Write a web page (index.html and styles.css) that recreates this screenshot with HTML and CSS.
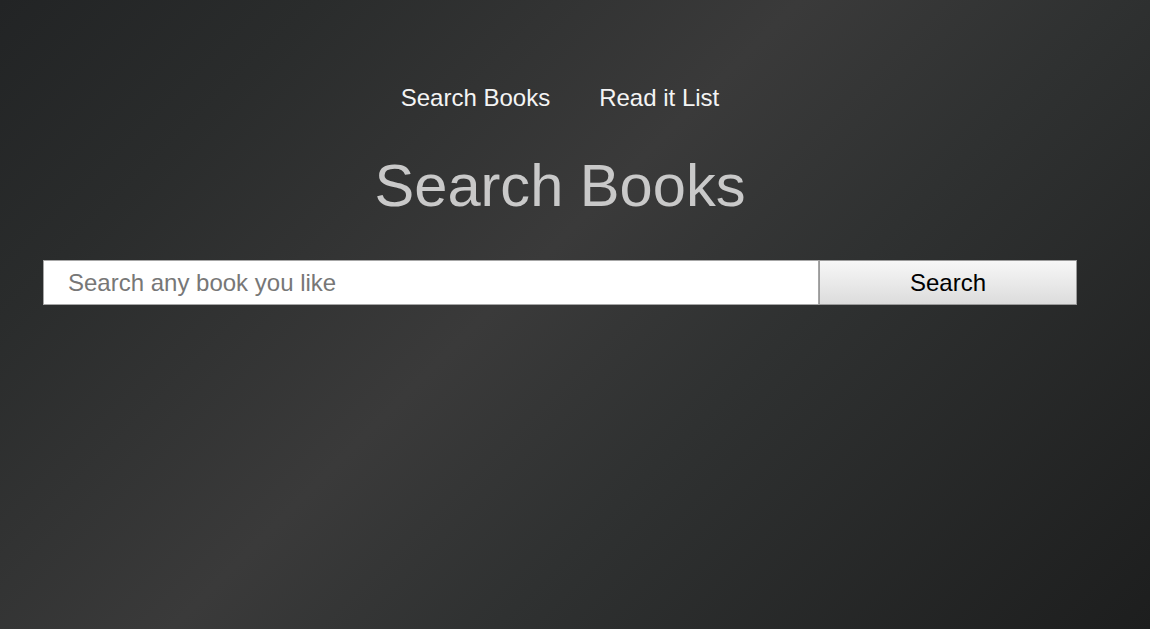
FILE: index.html
```html
<!DOCTYPE html>
<html lang="en">
<head>
<meta charset="utf-8">
<title>Search Books</title>
<link rel="stylesheet" href="styles.css">
</head>
<body>
<div class="page">
  <nav class="nav">
    <a class="nav-link" href="#">Search Books</a>
    <a class="nav-link" href="#">Read it List</a>
  </nav>
  <h1 class="title">Search Books</h1>
  <form class="search-form">
    <input class="search-input" type="text" placeholder="Search any book you like">
    <button class="search-button" type="button">Search</button>
  </form>
</div>
</body>
</html>
```

FILE: styles.css
```css
html, body {
  margin: 0;
  padding: 0;
}

body {
  min-height: 100vh;
  font-family: "Liberation Sans", Arial, sans-serif;
  background: linear-gradient(135deg, #222425 0%, #2a2c2c 18%, #3a3a3a 45%, #2f3131 63%, #1d1e1e 100%);
  background-attachment: fixed;
}

.page {
  width: 1120px;
  padding-top: 84px;
  display: flex;
  flex-direction: column;
}

.nav {
  display: flex;
  justify-content: center;
  gap: 49px;
  height: 28px;
}

.nav-link {
  color: #f4f4f4;
  text-decoration: none;
  font-size: 24px;
  line-height: 28px;
}

.title {
  margin: 44px 0 0;
  text-align: center;
  font-size: 59.6px;
  line-height: 60px;
  font-weight: normal;
  color: #c9c9c9;
}

.search-form {
  display: flex;
  margin: 44px 0 0 43px;
  width: 1034px;
  height: 45px;
}

.search-input {
  box-sizing: border-box;
  width: 776px;
  height: 45px;
  margin: 0;
  padding: 0 24px;
  border: 1px solid #a6a6a6;
  background: #ffffff;
  font-family: "Liberation Sans", Arial, sans-serif;
  font-size: 24px;
  color: #333;
  outline: none;
}

.search-input::placeholder {
  color: #777777;
}

.search-button {
  box-sizing: border-box;
  width: 258px;
  height: 45px;
  margin: 0;
  padding: 0;
  border: 1px solid #9a9a9a;
  background: linear-gradient(#f7f7f7, #dcdcdc);
  font-family: "Liberation Sans", Arial, sans-serif;
  font-size: 24px;
  color: #000;
  cursor: pointer;
}
```
